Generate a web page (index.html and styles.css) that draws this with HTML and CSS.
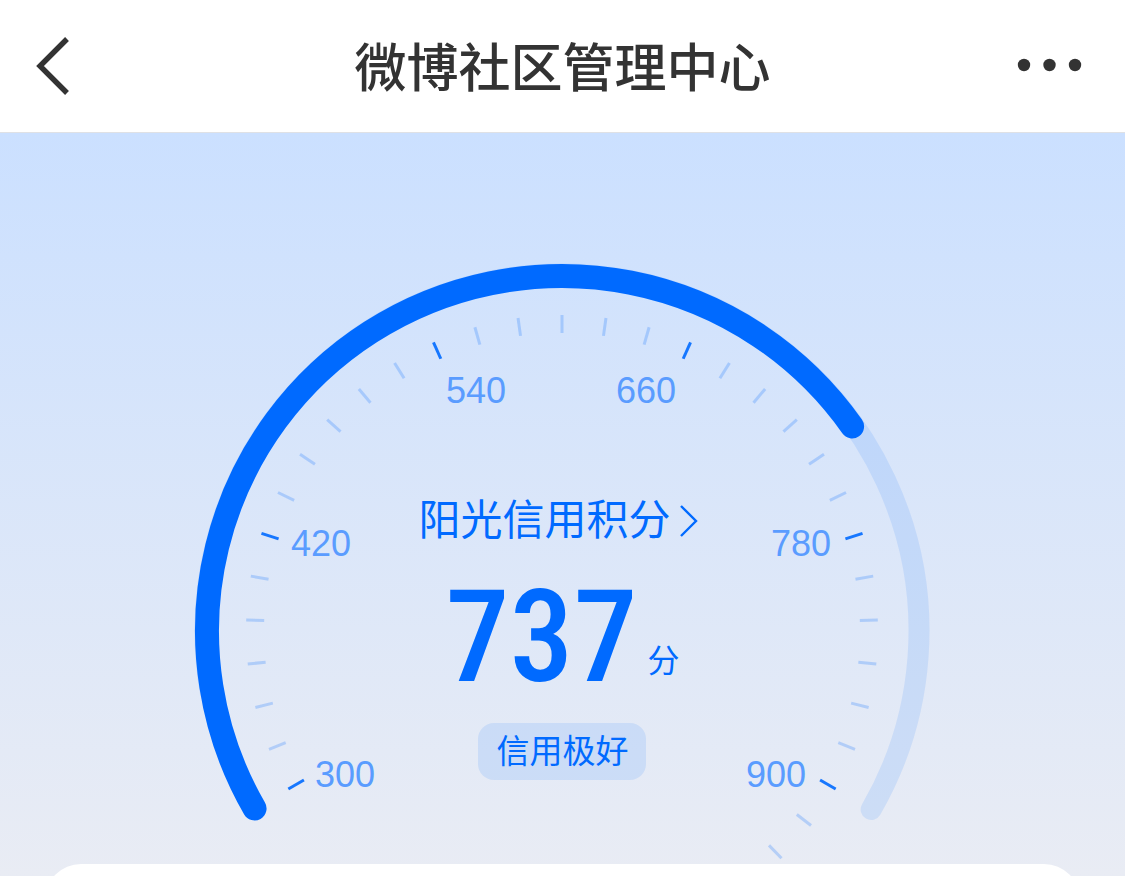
FILE: index.html
```html
<!DOCTYPE html>
<html lang="zh-CN">
<head>
    <meta charset="UTF-8">
    <meta name="viewport" content="width=device-width, initial-scale=1.0">
    <title>微博社区管理中心</title>
    <link rel="stylesheet" href="styles.css">
</head>
<body>
<header class="nav-bar">
    <button class="nav-button" type="button" aria-label="返回">
        <svg width="36" height="60" viewBox="0 0 36 60">
            <path d="M33 3 L6 30 L33 57" fill="none" stroke="#333" stroke-width="5.4"/>
        </svg>
    </button>
    <h1 class="nav-title">微博社区管理中心</h1>
    <button class="nav-button" type="button" aria-label="更多">
        <svg width="74" height="16" viewBox="0 0 74 16" fill="#333">
            <circle cx="7" cy="7" r="6.2"/>
            <circle cx="32.5" cy="7" r="6.2"/>
            <circle cx="58" cy="7" r="6.2"/>
        </svg>
    </button>
</header>
<main class="credit">
    <section class="gauge">
        <svg class="gauge-dial" viewBox="0 0 745 611">
            <path id="track" class="track"/>
            <path id="progress" class="progress"/>
            <g id="ticks"></g>
            <g class="scale">
                <text x="125" y="534">300</text>
                <text x="101" y="303">420</text>
                <text x="256" y="150">540</text>
                <text x="426" y="150">660</text>
                <text x="581" y="303">780</text>
                <text x="556" y="534">900</text>
            </g>
        </svg>
        <div class="readout">
            <a class="readout-link" href="#">阳光信用积分<svg width="36" height="36" viewBox="0 0 36 36">
                <path d="M10 3 L25 18 L10 33" fill="none" stroke="#006aff" stroke-width="2.4"/>
            </svg></a>
            <div class="score"><span class="score-value">737</span><span class="score-unit">分</span></div>
            <div class="level">信用极好</div>
        </div>
    </section>
    <section class="card"></section>
</main>
<script>
    const score = 737;
    const min = 300;
    const max = 900;
    const cx = 372;
    const cy = 378;

    // Angle is in degrees, 0 points up
    const point = (r, angle) => {
        const rad = angle * Math.PI / 180;
        return [cx + r * Math.sin(rad), cy - r * Math.cos(rad)];
    };

    const arc = (r, from, to) => {
        const large = to - from > 180 ? 1 : 0;
        return `M${point(r, from)} A${r} ${r} 0 ${large} 1 ${point(r, to)}`;
    };

    const scoreAngle = -120 + (score - min) / (max - min) * 240;
    document.getElementById('track').setAttribute('d', arc(357, -100, 120));
    document.getElementById('progress').setAttribute('d', arc(355, -120, scoreAngle));

    // Every sixth tick is a labelled one
    let ticks = '';
    for (let i = 0; i <= 32; i++) {
        const angle = -120 + i * 8;
        const major = i % 6 === 0;
        ticks += `<path class="${major ? 'tick major' : 'tick'}" d="M${point(298, angle)} L${point(316, angle)}"/>`;
    }
    document.getElementById('ticks').innerHTML = ticks;
</script>
</body>
</html>
```
FILE: styles.css
```css
* {
    box-sizing: border-box;
}
body {
    margin: 0;
    min-height: 100vh;
    display: flex;
    flex-direction: column;
    font-family: "Liberation Sans", "Noto Sans CJK SC", sans-serif;
    background: #fff;
}
.nav-bar {
    display: flex;
    align-items: center;
    justify-content: space-between;
    height: 133px;
    padding: 0 34px;
    border-bottom: 1px solid #dfe1e5;
}
.nav-button {
    display: flex;
    width: 74px;
    padding: 0;
    border: none;
    background: none;
    cursor: pointer;
}
.nav-title {
    margin: 0;
    padding-top: 6px;
    font-size: 52px;
    line-height: 76px;
    font-weight: 500;
    color: #333;
}
.credit {
    flex: 1;
    display: flex;
    flex-direction: column;
    padding-top: 120px;
    overflow: hidden;
    background: linear-gradient(#cbe0ff, #e9ecf4);
}
.gauge {
    display: grid;
    justify-items: center;
}
.gauge-dial,
.readout {
    grid-area: 1 / 1;
}
.gauge-dial {
    display: block;
    width: 100%;
    max-width: 745px;
}
.track {
    fill: none;
    stroke: #006aff;
    stroke-opacity: 0.11;
    stroke-width: 21;
    stroke-linecap: round;
}
.progress {
    fill: none;
    stroke: #006aff;
    stroke-width: 24;
    stroke-linecap: round;
}
.tick {
    stroke: #006aff;
    stroke-opacity: 0.22;
    stroke-width: 3;
}
.tick.major {
    stroke-opacity: 0.9;
}
.scale {
    font-size: 36px;
    fill: #5a9cff;
}
.readout {
    display: flex;
    flex-direction: column;
    align-items: center;
    padding-top: 238px;
    color: #006aff;
}
.readout-link {
    display: flex;
    align-items: center;
    font-size: 42px;
    line-height: 60px;
    color: inherit;
    text-decoration: none;
}
.score {
    display: flex;
    align-items: flex-end;
    gap: 10px;
    margin-top: 40px;
}
.score-value {
    font-family: "Roboto Condensed", Roboto, sans-serif;
    font-size: 128px;
    line-height: 92px;
    font-weight: 500;
}
.score-unit {
    margin-bottom: 6px;
    font-size: 32px;
    line-height: 32px;
}
.level {
    margin-top: 40px;
    padding: 0 18px;
    border-radius: 16px;
    font-size: 33px;
    line-height: 57px;
    background: rgba(0, 106, 255, 0.11);
}
.card {
    flex: 1 0 36px;
    margin: 0 45px -24px;
    border-radius: 36px 36px 0 0;
    background: #fff;
}
```
